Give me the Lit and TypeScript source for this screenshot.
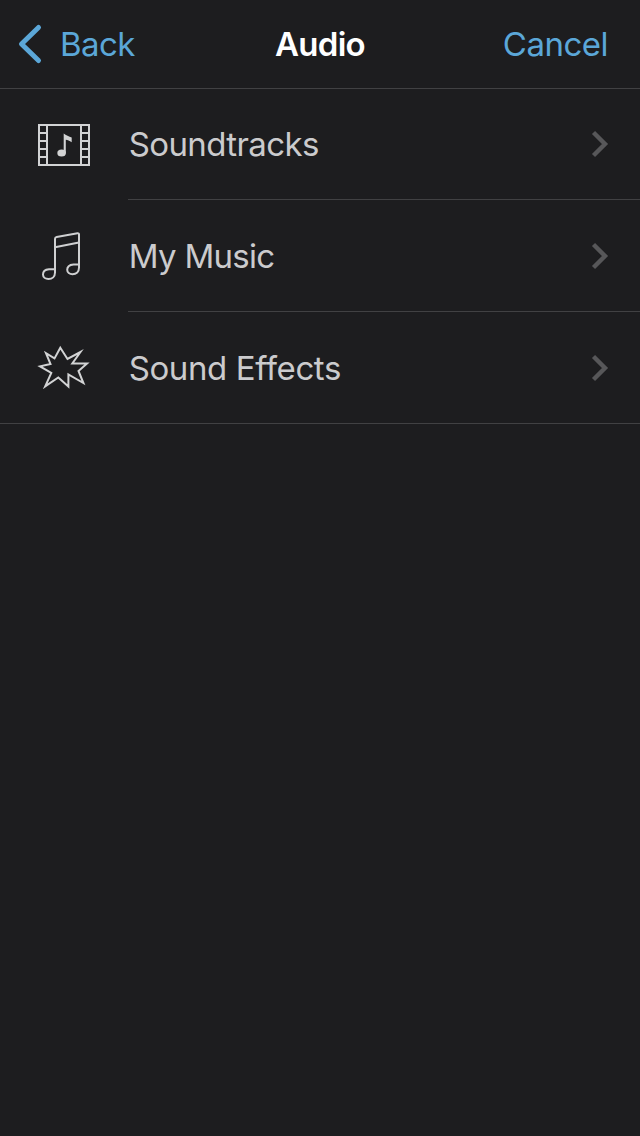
import { LitElement, html, css, svg } from "lit";
import { customElement } from "lit/decorators.js";

const film = svg`
  <g fill="none" stroke="#d2d3d4" stroke-width="2">
    <path d="M9 10H59V50H9Z M17 10V50 M51 10V50"/>
    <path d="M9 18H17 M9 26H17 M9 34H17 M9 42H17 M51 18H59 M51 26H59 M51 34H59 M51 42H59"/>
  </g>
  <ellipse cx="31.6" cy="38" rx="4.3" ry="3.6" fill="#d2d3d4"/>
  <path d="M33.7 38.5V18.5C36 20.6 39 21.3 41.7 22.6V27.3C39.5 25.5 37.5 24.9 35.8 24.7V38.5Z" fill="#d2d3d4"/>`;

const notes = svg`
  <g fill="none" stroke="#cfd0d1" stroke-width="2" stroke-linejoin="round">
    <path d="M49 38.2L43.5 38.4C39.7 38.7 37.2 40.8 37.2 43.8C37.2 46.6 39.6 48.2 42.5 48.2C46.3 48.2 49 45.8 49 41.5V8.5Q49 7 47.5 7.2L26.6 11.1Q25 11.4 25 13V46.5C25 50.6 22.2 53 18.5 53C15.4 53 13 51.2 13 48.5C13 45.4 15.5 43.5 19 43.2L25 43"/>
    <path d="M25 21.3L49 16.5"/>
  </g>`;

const burst = svg`
  <path fill="none" stroke="#d2d3d4" stroke-width="2" stroke-miterlimit="5"
    d="M30.3 9.8L37.5 21L50.5 14L42.3 25.5H57L48.5 33L53.4 45L38.4 36.5V48.5L28.3 39.5L15.2 48.4L21.3 35L10 28.4L20.5 26L16 15.2L24.5 20.4Z"/>`;

@customElement("app-root")
export class AppRoot extends LitElement {
  static styles = css`
    :host {
      display: block;
      height: 1136px;
      background: #1d1d1f;
      font-family: Inter, "Liberation Sans", sans-serif;
      font-size: 33px;
      color: #cbcbcd;
    }
    .bar {
      display: grid;
      grid-template-columns: 1fr auto 1fr;
      align-items: center;
      height: 88px;
      border-bottom: 1px solid #414143;
    }
    .action {
      display: flex;
      align-items: center;
      color: #5ba7d8;
    }
    .back { padding-left: 18px; gap: 18px; }
    .back span { letter-spacing: -0.6px; }
    .cancel { justify-content: flex-end; padding-right: 32px; letter-spacing: -0.5px; }
    .title { color: #fff; font-weight: 600; letter-spacing: -0.75px; }
    .list { border-bottom: 1px solid #414143; }
    .row { display: flex; height: 112px; }
    .row:first-child { height: 111px; }
    .row:last-child { height: 111px; }
    .icon { flex: none; width: 68px; height: 60px; margin: 26px 30px 0; }
    .body {
      flex: 1;
      display: flex;
      align-items: center;
      justify-content: space-between;
      padding-right: 31px;
      border-bottom: 1px solid #414143;
    }
    .row:last-child .body { border-bottom: 0; }
    .body span { padding-left: 0.7px; }
    .soundtracks { letter-spacing: -0.6px; }
    .music { letter-spacing: -0.7px; }
    .effects { letter-spacing: -0.4px; }
    svg { display: block; overflow: visible; }
  `;

  private row(icon: unknown, label: string, name: string) {
    return html`<div class="row">
      <svg class="icon" viewBox="0 0 68 60">${icon}</svg>
      <div class="body">
        <span class=${name}>${label}</span>
        <svg width="18" height="28" viewBox="0 0 18 28">
          <path d="M2.5 2.5L14 14L2.5 25.5" fill="none" stroke="#575759" stroke-width="4.4"/>
        </svg>
      </div>
    </div>`;
  }

  render() {
    return html`
      <div class="bar">
        <div class="action back">
          <svg width="24" height="40" viewBox="0 0 24 40">
            <path d="M20.5 3.5L3.5 20L20.5 36.5" fill="none" stroke="#5ba7d8" stroke-width="5" stroke-linecap="round" stroke-linejoin="round"/>
          </svg>
          <span>Back</span>
        </div>
        <div class="title">Audio</div>
        <div class="action cancel">Cancel</div>
      </div>
      <div class="list">
        ${this.row(film, "Soundtracks", "soundtracks")}
        ${this.row(notes, "My Music", "music")}
        ${this.row(burst, "Sound Effects", "effects")}
      </div>`;
  }
}
